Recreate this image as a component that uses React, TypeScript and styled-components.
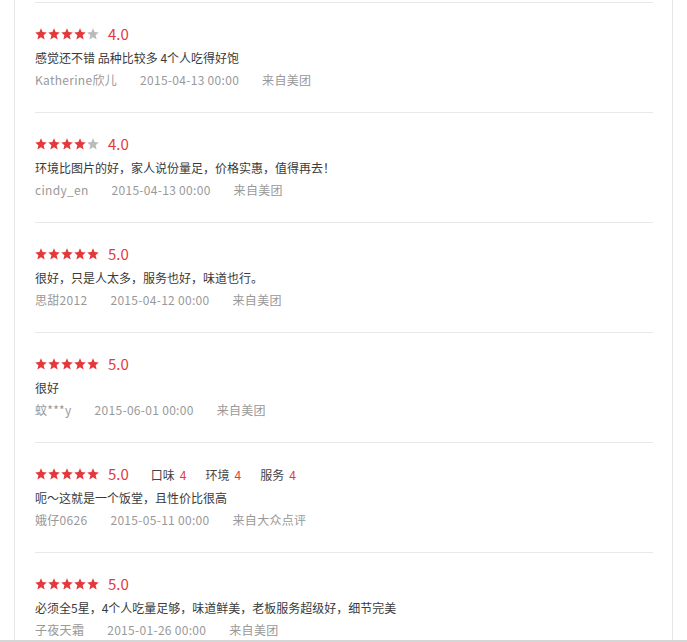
import React from "react";
import styled, { createGlobalStyle } from "styled-components";

const Global = createGlobalStyle`
  html, body { margin: 0; padding: 0; background: #fff; }
  body { font-family: "Noto Sans CJK SC", "Liberation Sans", sans-serif; }
`;

const Page = styled.div`
  height: 642px;
  box-sizing: border-box;
  border-bottom: 2px solid #d6d6d6;
  overflow: hidden;
`;

const Frame = styled.div`
  margin-left: 14px;
  width: 659px;
  height: 100%;
  box-sizing: border-box;
  border-left: 1px solid #e6e6e6;
  border-right: 1px solid #e6e6e6;
  padding: 2px 19px 0 20px;
`;

const Item = styled.div`
  border-top: 1px solid #e8e8e8;
  padding: 21px 0 21px;
  height: 110px;
  box-sizing: border-box;
`;

const RatingRow = styled.div`
  display: flex;
  align-items: center;
  height: 20px;
  margin-bottom: 3px;
`;

const Stars = styled.div`
  display: flex;
  gap: 1px;
`;

const Score = styled.span`
  margin-left: 9px;
  font-size: 15px;
  color: #e4393c;
  line-height: 20px;
`;

const SubScores = styled.div`
  display: flex;
  margin-left: 22px;
  gap: 19px;
  font-size: 12px;
  color: #444;
`;

const Sub = styled.span`
  display: flex;
  gap: 5px;
`;

const SubValue = styled.span`
  color: #e4393c;
`;

const Comment = styled.div`
  font-size: 12px;
  line-height: 22px;
  color: #3a3a3a;
  white-space: nowrap;
`;

const Meta = styled.div`
  display: flex;
  font-size: 12px;
  line-height: 22px;
  color: #999;
  letter-spacing: 0.3px;
`;

const MetaPart = styled.span`
  margin-right: 23px;
`;

const Star: React.FC<{ on: boolean }> = ({ on }) => (
  <svg width="12" height="12" viewBox="0 0 24 24">
    <polygon
      points="12,0.5 15.2,8.2 23.5,8.8 17.2,14.3 19.3,22.8 12,18.3 4.7,22.8 6.8,14.3 0.5,8.8 8.8,8.2"
      fill={on ? "#e4393c" : "#bbbbbb"}
    />
  </svg>
);

type Review = {
  stars: number;
  text: string;
  user: string;
  date: string;
  source: string;
  subs?: [string, number][];
};

const reviews: Review[] = [
  { stars: 4, text: "感觉还不错 品种比较多 4个人吃得好饱", user: "Katherine欣儿", date: "2015-04-13 00:00", source: "来自美团" },
  { stars: 4, text: "环境比图片的好，家人说份量足，价格实惠，值得再去！", user: "cindy_en", date: "2015-04-13 00:00", source: "来自美团" },
  { stars: 5, text: "很好，只是人太多，服务也好，味道也行。", user: "思甜2012", date: "2015-04-12 00:00", source: "来自美团" },
  { stars: 5, text: "很好", user: "蚊***y", date: "2015-06-01 00:00", source: "来自美团" },
  {
    stars: 5,
    text: "呃～这就是一个饭堂，且性价比很高",
    user: "娥仔0626",
    date: "2015-05-11 00:00",
    source: "来自大众点评",
    subs: [["口味", 4], ["环境", 4], ["服务", 4]],
  },
  { stars: 5, text: "必须全5星，4个人吃量足够，味道鲜美，老板服务超级好，细节完美", user: "子夜天霜", date: "2015-01-26 00:00", source: "来自美团" },
];

export default function App() {
  return (
    <Page>
      <Global />
      <Frame>
        {reviews.map((r, i) => (
          <Item key={i}>
            <RatingRow>
              <Stars>
                {[0, 1, 2, 3, 4].map((k) => (
                  <Star key={k} on={k < r.stars} />
                ))}
              </Stars>
              <Score>{r.stars.toFixed(1)}</Score>
              {r.subs && (
                <SubScores>
                  {r.subs.map(([label, v]) => (
                    <Sub key={label}>
                      {label}
                      <SubValue>{v}</SubValue>
                    </Sub>
                  ))}
                </SubScores>
              )}
            </RatingRow>
            <Comment>{r.text}</Comment>
            <Meta>
              <MetaPart>{r.user}</MetaPart>
              <MetaPart>{r.date}</MetaPart>
              <MetaPart>{r.source}</MetaPart>
            </Meta>
          </Item>
        ))}
      </Frame>
    </Page>
  );
}
